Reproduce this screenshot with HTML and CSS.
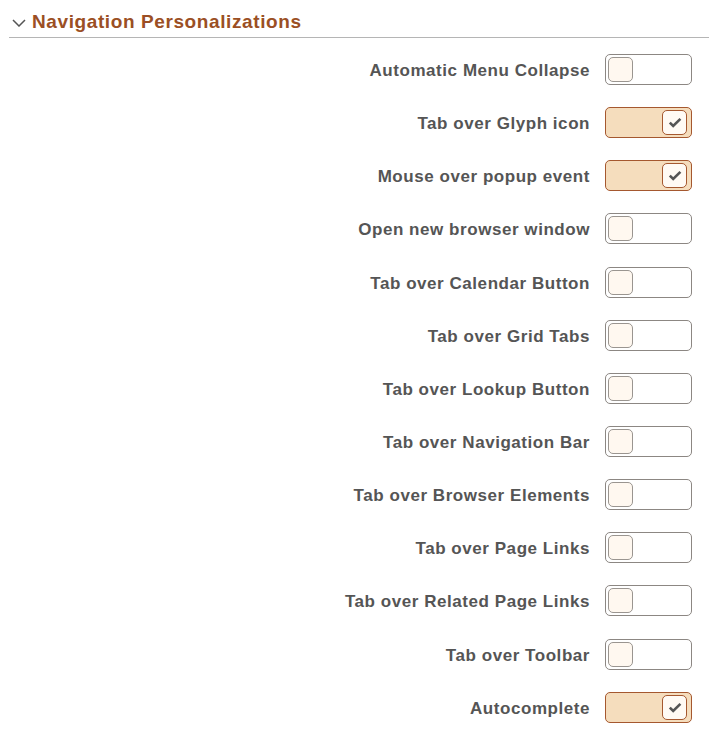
FILE: index.html
```html
<!DOCTYPE html>
<html lang="en">
<head>
<meta charset="utf-8">
<title>Navigation Personalizations</title>
<link rel="stylesheet" href="styles.css">
</head>
<body>
<section class="panel">
  <header class="panel-header">
    <svg class="chevron" width="14" height="8" viewBox="0 0 14 8" aria-hidden="true"><path d="M1 1 L7 7 L13 1" fill="none" stroke="#555" stroke-width="1.5"/></svg>
    <h2 class="panel-title">Navigation Personalizations</h2>
  </header>
  <div class="settings">
    <span class="label">Automatic Menu Collapse</span>
    <span class="toggle"><span class="knob"></span></span>
    <span class="label">Tab over Glyph icon</span>
    <span class="toggle on"><span class="knob"><svg viewBox="0 0 14 11" width="14" height="11"><path d="M1.8 5.6 L5.2 9 L12.4 1.8" fill="none" stroke="#555" stroke-width="2.6"/></svg></span></span>
    <span class="label">Mouse over popup event</span>
    <span class="toggle on"><span class="knob"><svg viewBox="0 0 14 11" width="14" height="11"><path d="M1.8 5.6 L5.2 9 L12.4 1.8" fill="none" stroke="#555" stroke-width="2.6"/></svg></span></span>
    <span class="label">Open new browser window</span>
    <span class="toggle"><span class="knob"></span></span>
    <span class="label">Tab over Calendar Button</span>
    <span class="toggle"><span class="knob"></span></span>
    <span class="label">Tab over Grid Tabs</span>
    <span class="toggle"><span class="knob"></span></span>
    <span class="label">Tab over Lookup Button</span>
    <span class="toggle"><span class="knob"></span></span>
    <span class="label">Tab over Navigation Bar</span>
    <span class="toggle"><span class="knob"></span></span>
    <span class="label">Tab over Browser Elements</span>
    <span class="toggle"><span class="knob"></span></span>
    <span class="label">Tab over Page Links</span>
    <span class="toggle"><span class="knob"></span></span>
    <span class="label">Tab over Related Page Links</span>
    <span class="toggle"><span class="knob"></span></span>
    <span class="label">Tab over Toolbar</span>
    <span class="toggle"><span class="knob"></span></span>
    <span class="label">Autocomplete</span>
    <span class="toggle on"><span class="knob"><svg viewBox="0 0 14 11" width="14" height="11"><path d="M1.8 5.6 L5.2 9 L12.4 1.8" fill="none" stroke="#555" stroke-width="2.6"/></svg></span></span>
  </div>
</section>
</body>
</html>
```
FILE: styles.css
```css
html, body {
  margin: 0;
  padding: 0;
  background: #fff;
  font-family: "Liberation Sans", Arial, sans-serif;
}
.panel {
  padding-left: 9px;
}
.panel-header {
  display: flex;
  align-items: center;
  height: 38px;
  box-sizing: border-box;
  border-bottom: 1px solid #b5b5b5;
  padding: 8px 0 0 3px;
}
.chevron {
  flex: none;
  margin-right: 6px;
  margin-top: 1px;
}
.panel-title {
  margin: 0;
  font-size: 19px;
  letter-spacing: 0.6px;
  font-weight: bold;
  color: #9b4f24;
  line-height: 22px;
  margin-top: -2px;
}
.settings {
  display: grid;
  grid-template-columns: 1fr auto;
  column-gap: 16px;
  row-gap: 22.15px;
  align-items: center;
  padding: 16px 17px 0 0;
}
.label {
  text-align: right;
  font-size: 17px;
  letter-spacing: 0.55px;
  font-weight: bold;
  color: #555;
  line-height: 20px;
  padding-top: 3px;
  margin-right: -1px;
}
.toggle {
  display: flex;
  align-items: center;
  width: 87px;
  height: 31px;
  box-sizing: border-box;
  border: 1px solid #8c8783;
  border-radius: 5px;
  background: #fff;
  padding: 2px;
}
.knob {
  display: flex;
  align-items: center;
  justify-content: center;
  width: 25px;
  height: 25px;
  box-sizing: border-box;
  border: 1px solid #9a9590;
  border-radius: 5px;
  background: #fff8f0;
}
.toggle.on {
  background: #f5ddbd;
  border-color: #a5582f;
  justify-content: flex-end;
  padding-right: 4px;
}
.toggle.on .knob {
  border-color: #a5582f;
  background: #fffaf4;
}
```
